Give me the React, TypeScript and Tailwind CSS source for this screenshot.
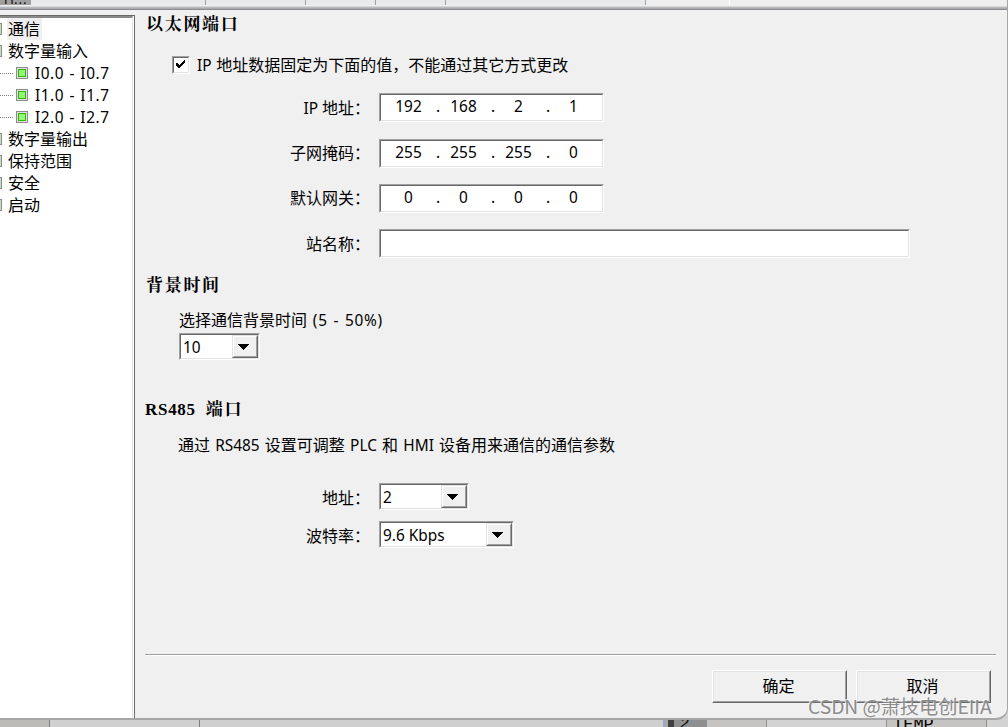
import type { ReactNode } from "react";
import clsx from "clsx";

const ROOT_ITEM = "root";

interface TreeItem {
  label: string;
  kind: "root" | "leaf";
  selected?: boolean;
}

const TREE: TreeItem[] = [
  { label: "通信", kind: ROOT_ITEM, selected: true },
  { label: "数字量输入", kind: ROOT_ITEM },
  { label: "I0.0 - I0.7", kind: "leaf" },
  { label: "I1.0 - I1.7", kind: "leaf" },
  { label: "I2.0 - I2.7", kind: "leaf" },
  { label: "数字量输出", kind: ROOT_ITEM },
  { label: "保持范围", kind: ROOT_ITEM },
  { label: "安全", kind: ROOT_ITEM },
  { label: "启动", kind: ROOT_ITEM },
];

// Latin runs are set slightly smaller than the Chinese text around them
function Latin({ className, children }: { className?: string; children: ReactNode }) {
  return (
    <span
      className={clsx(
        "font-['Noto_Sans',sans-serif] text-[15.4px] font-normal whitespace-pre",
        className
      )}
    >
      {children}
    </span>
  );
}

function Sunken({ className, children }: { className?: string; children?: ReactNode }) {
  return (
    <div
      className={clsx(
        "shrink-0 border border-t-[#a0a0a0] border-l-[#a0a0a0] border-r-white border-b-white",
        className
      )}
    >
      <div className="flex h-full w-full border border-t-[#696969] border-l-[#696969] border-r-[#e3e3e3] border-b-[#e3e3e3] bg-white">
        {children}
      </div>
    </div>
  );
}

function IpField({ octets }: { octets: string[] }) {
  return (
    <Sunken className="h-[29px] w-[225px]">
      <div className="flex h-[21px] items-center pl-1">
        {octets.map((octet, i) => (
          <div key={i} className="flex">
            <span className="w-[47px] text-center">
              <Latin>{octet}</Latin>
            </span>
            <span className="w-2 text-right">{i < 3 && <Latin>.</Latin>}</span>
          </div>
        ))}
      </div>
    </Sunken>
  );
}

function Combo({ value, className }: { value: string; className: string }) {
  return (
    <Sunken className={clsx("h-[27px]", className)}>
      <div className="flex flex-1 items-center pt-0.5 pl-0.5">
        <Latin>{value}</Latin>
      </div>
      <div className="h-full w-[26px] border border-t-[#e3e3e3] border-l-[#e3e3e3] border-r-[#696969] border-b-[#696969] bg-[#f0f0f0]">
        <div className="flex h-full items-center justify-center border border-t-white border-l-white border-r-[#a0a0a0] border-b-[#a0a0a0] pr-[3px]">
          <svg width="11" height="6" viewBox="0 0 11 6" shapeRendering="crispEdges">
            <path d="M0 0H11V1H10V2H9V3H8V4H7V5H6V6H5V5H4V4H3V3H2V2H1V1H0Z" />
          </svg>
        </div>
      </div>
    </Sunken>
  );
}

function Field({
  label,
  labelClass,
  children,
}: {
  label: ReactNode;
  labelClass?: string;
  children: ReactNode;
}) {
  return (
    <div className="flex items-center">
      <span className={clsx("w-[235px] text-right", labelClass)}>{label}</span>
      <div className="ml-[9px]">{children}</div>
    </div>
  );
}

function SectionTitle({ children }: { children: ReactNode }) {
  return (
    <h2 className="h-6 pt-px pl-[11px] font-['Liberation_Serif','Noto_Serif_CJK_SC','Noto_Sans_CJK_SC',serif] text-[17px] leading-6 font-bold tracking-[1.7px] whitespace-pre">
      {children}
    </h2>
  );
}

function PushButton({ children }: { children: ReactNode }) {
  return (
    <button className="h-[33px] w-[135px] border border-t-white border-l-white border-r-[#696969] border-b-[#696969]">
      <span className="flex h-full items-center justify-center border border-t-[#e3e3e3] border-l-[#e3e3e3] border-r-[#a0a0a0] border-b-[#a0a0a0] pr-0.5 pb-[3px]">
        {children}
      </span>
    </button>
  );
}

function Tree() {
  return (
    <nav className="mt-[5px] flex w-[135px] shrink-0 flex-col border-t border-r border-[#696969]">
      <div className="flex-1 border-r border-white">
        <div className="h-full border-t-2 border-r border-t-[#8a8a8a] border-r-[#e3e3e3] bg-white">
          {TREE.map((item) =>
            item.kind === "leaf" ? (
              <div key={item.label} className="flex h-[22px] items-center">
                <span className="w-[13px] border-t border-dotted border-[#808080]" />
                <span className="ml-[3px] size-3 border border-[#8c8c8c] bg-[#e0e0e0] p-px">
                  <span className="block size-2 border border-[#2fb800] bg-[#93f77a]" />
                </span>
                <span className="ml-[7px] leading-[22px]">
                  <Latin className="tracking-[0.55px] [word-spacing:0.8px]">{item.label}</Latin>
                </span>
              </div>
            ) : (
              <div key={item.label} className="flex h-[22px] items-center">
                <span className="h-3 w-0.5 border-y border-r border-[#8c8c8c] bg-[#c4dfc0]" />
                <span
                  className={clsx(
                    "ml-[5px] h-[22px] pr-0.5 pl-px leading-5",
                    item.selected && "bg-[#efefef]"
                  )}
                >
                  {item.label}
                </span>
              </div>
            )
          )}
        </div>
      </div>
    </nav>
  );
}

function HeaderStrip() {
  return (
    <div className="flex h-[10px] flex-col">
      <div className="flex h-[6px] items-start bg-[#efefef]">
        <div className="flex h-[5px] w-[646px] overflow-hidden border-r border-[#a0a0a0] bg-[#e8eaec]">
          <div className="relative h-full w-[31px] overflow-hidden bg-[#a0a0a0]">
            <span className="absolute bottom-0 left-1 text-xs leading-[13px]">I I…</span>
          </div>
          <div className="w-[175px] border-r border-[#a0a0a0]" />
          <div className="w-[100px] border-r border-[#a0a0a0]" />
          <div className="w-[70px] border-r border-[#a0a0a0]" />
          <div className="w-[70px] border-r border-[#a0a0a0]" />
        </div>
        <div className="h-[5px] w-[84px] border-r border-white" />
      </div>
      <div className="h-px bg-[#d6d7d8]" />
      <div className="h-px bg-[#b9babb]" />
      <div className="h-px bg-[#ababad]" />
      <div className="h-px bg-[#8b8c90]" />
    </div>
  );
}

function BackgroundRow() {
  return (
    <div className="flex h-[9px] overflow-hidden bg-[#d3d3d3] font-normal">
      <div className="w-[50px] border-r border-[#808080] bg-[#bdbbb8]" />
      <div className="w-[150px] border-r border-[#808080] bg-[#d0d0d0]" />
      <div className="w-[463px] bg-[#cfcfcf]" />
      <div className="w-[3px] bg-[#9da9c4]" />
      <div className="w-[2px] bg-[#aaa]" />
      <div className="w-[6px] bg-[#404040]" />
      <div className="w-[33px] bg-[#8e8f90] pl-1.5 font-['Liberation_Mono',monospace] text-[15px] leading-[9px] italic">
        2
      </div>
      <div className="w-[60px] border-r border-[#909090] bg-[#c6c4c2]" />
      <div className="w-[120px] border-r border-[#909090]" />
      <div className="w-[100px] border-r border-[#909090] bg-[#c6c4c2] pl-1.5 font-['Liberation_Mono',monospace] text-[17px] leading-[9px]">
        TEMP
      </div>
    </div>
  );
}

export default function App() {
  return (
    <div className="relative flex h-[727px] w-[1008px] flex-col overflow-hidden bg-[#d3d3d3] font-['Noto_Sans_CJK_SC',sans-serif] text-base leading-5 font-normal text-black">
      <div className="z-10 flex h-[720px] shrink-0 flex-col overflow-hidden rounded-br-xl border-r border-b-2 border-[#a6a6a6] bg-[#f0f0f0]">
        <HeaderStrip />
        <div className="flex flex-1">
          <Tree />
          <main className="flex-1">
            <div className="pt-0.5">
              <SectionTitle>以太网端口</SectionTitle>
            </div>

            <div className="mt-[19px] flex h-[19px] items-center pl-[37px]">
              <Sunken className="h-[18px] w-[18px]">
                <svg width="14" height="14" viewBox="0 0 14 14" shapeRendering="crispEdges">
                  <path d="M2 5H4V6H5V7H6V6H7V5H8V4H9V3H10V2H11V5H10V6H9V7H8V8H7V9H6V10H4V9H3V8H2Z" />
                </svg>
              </Sunken>
              <span className="ml-[7px]">
                <Latin className="[word-spacing:0.8px]">IP </Latin>
                地址数据固定为下面的值，不能通过其它方式更改
              </span>
            </div>

            <div className="mt-[19px]">
              <Field label={<><Latin>IP </Latin>地址：</>}>
                <IpField octets={["192", "168", "2", "1"]} />
              </Field>
            </div>
            <div className="mt-[17px]">
              <Field label="子网掩码：" labelClass="pb-[3px]">
                <IpField octets={["255", "255", "255", "0"]} />
              </Field>
            </div>
            <div className="mt-4">
              <Field label="默认网关：" labelClass="pb-[3px]">
                <IpField octets={["0", "0", "0", "0"]} />
              </Field>
            </div>
            <div className="mt-4">
              <Field label="站名称：" labelClass="pb-0.5">
                <Sunken className="h-[29px] w-[531px]" />
              </Field>
            </div>

            <div className="mt-[15px]">
              <SectionTitle>背景时间</SectionTitle>
            </div>
            <div className="mt-3 pl-11">
              <p className="h-6 leading-5">
                选择通信背景时间
                <Latin className="tracking-[0.75px] [word-spacing:1px]"> (5 - 50%)</Latin>
              </p>
              <Combo value="10" className="w-[81px]" />
            </div>

            <div className="mt-[37px]">
              <SectionTitle>
                <span className="-ml-px tracking-[0.7px]">RS485</span>
                <span className="ml-[10px]">端口</span>
              </SectionTitle>
            </div>
            <p className="mt-[13px] pl-[43px]">
              通过<Latin className="[word-spacing:1.2px]"> RS485 </Latin>设置可调整
              <Latin className="[word-spacing:1.2px]"> PLC </Latin>和
              <Latin className="[word-spacing:1.2px]"> HMI </Latin>设备用来通信的通信参数
            </p>

            <div className="mt-[27px]">
              <Field label="地址：">
                <Combo value="2" className="w-[90px]" />
              </Field>
            </div>
            <div className="mt-[11px]">
              <Field label="波特率：">
                <Combo value="9.6 Kbps" className="w-[135px]" />
              </Field>
            </div>

            <div className="mt-[106px] mr-[11px] ml-[10px] border-t border-b border-t-[#a0a0a0] border-b-white" />
            <div className="mt-[14px] mr-4 flex justify-end gap-[9px]">
              <PushButton>确定</PushButton>
              <PushButton>取消</PushButton>
            </div>
          </main>
        </div>
      </div>
      <BackgroundRow />
      <span className="absolute top-[695px] left-[808px] z-20 text-[19.2px] leading-[22px] whitespace-nowrap text-[#8c8c8c] [text-shadow:-1px_-1px_0_#ffffffb0]">
        CSDN @萧技电创EIIA
      </span>
    </div>
  );
}
